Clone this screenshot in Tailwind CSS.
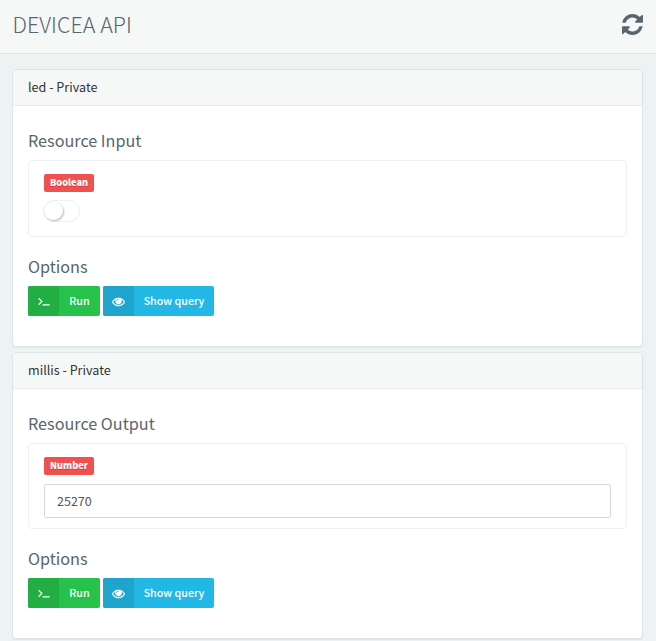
<!DOCTYPE html>
<html lang="en">
<head>
<meta charset="utf-8">
<title>DEVICEA API</title>
<script src="https://cdn.jsdelivr.net/npm/@tailwindcss/browser@4"></script>
</head>
<body class="h-[641px] overflow-hidden bg-[#edf2f3] font-['Noto_Sans_CJK_SC','Noto_Sans',sans-serif] text-[#58666e]">
<svg class="hidden">
  <symbol id="terminal" viewBox="0 0 1664 1792"><path fill="currentColor" stroke="currentColor" stroke-width="70" d="M585 983l-466 466q-10 10-23 10t-23-10l-50-50q-10-10-10-23t10-23l393-393-393-393q-10-10-10-23t10-23l50-50q10-10 23-10t23 10l466 466q10 10 10 23t-10 23zm1079 457v64q0 14-9 23t-23 9h-960q-14 0-23-9t-9-23v-64q0-14 9-23t23-9h960q14 0 23 9t9 23z"/></symbol>
  <symbol id="eye" viewBox="0 0 1792 1792"><path fill="currentColor" stroke="currentColor" stroke-width="30" d="M1664 960q-152-236-381-353 61 104 61 225 0 185-131.5 316.5t-316.5 131.5-316.5-131.5-131.5-316.5q0-121 61-225-229 117-381 353 133 205 333.5 326.5t434.5 121.5 434.5-121.5 333.5-326.5zm-720-384q0-20-14-34t-34-14q-125 0-214.5 89.5t-89.5 214.5q0 20 14 34t34 14 34-14 14-34q0-86 61-147t147-61q20 0 34-14t14-34zm848 384q0 34-20 69-140 230-376.5 368.5t-499.5 138.5-499.5-139-376.5-368q-20-35-20-69t20-69q140-229 376.5-368t499.5-139 499.5 139 376.5 368q20 35 20 69z"/></symbol>
</svg>
<header class="flex h-[54px] items-start justify-between border-b border-[#dee5e7] bg-[#f6f8f8] pr-[13px] pl-[12.5px]">
  <h1 class="pt-[8px] text-[21.5px] leading-[32px] font-light">DEVICEA API</h1>
  <svg class="mt-3 h-[25px] w-[21px]" viewBox="0 0 1536 1792"><path fill="#58666e" d="M1511 1056q0 5-1 7-64 268-268 434.500t-478 166.500q-146 0-282.500-55t-243.500-157l-129 129q-19 19-45 19t-45-19-19-45v-448q0-26 19-45t45-19h448q26 0 45 19t19 45-19 45l-137 137q71 66 161 102t187 36q134 0 250-65t186-179q11-17 53-117 8-23 30-23h192q13 0 22.500 9.500t9.500 22.500zm25-800v448q0 26-19 45t-45 19h-448q-26 0-45-19t-19-45 19-45l138-138q-148-137-349-137-134 0-250 65t-186 179q-11 17-53 117-8 23-30 23h-199q-13 0-22.500-9.500t-9.500-22.500v-7q65-268 270-434.500t480-166.500q146 0 284 55.500t245 156.500l130-129q19-19 45-19t45 19 19 45z"/></svg>
</header>
<main class="flex flex-col gap-[5px] pt-[15px] pr-[13px] pl-[12px]">
  <section class="h-[278px] rounded-[4px] border border-[#dee5e7] bg-white shadow-[0_1px_1px_rgba(0,0,0,0.05)]">
    <h2 class="h-[36px] rounded-t-[3px] border-b border-[#e6ecee] bg-[#f6f8f8] pl-[15px] text-[12.6px] leading-[33px] text-[#333]">led - Private</h2>
    <div class="px-[15px] pt-[24px]">
      <h3 class="h-[30px] text-[16.2px] leading-5">Resource Input</h3>
      <div class="flex h-[77px] flex-col items-start rounded-[4px] border border-[#edf1f2] px-[15px] pt-[13px]">
        <span class="flex h-[18px] w-[50px] items-center justify-center rounded-[2px] bg-[#f05050] text-[9.2px] leading-none font-black text-white [text-shadow:0_1px_0_rgba(0,0,0,0.2)]">Boolean</span>
        <div class="mt-2 -ml-px h-[22px] w-[37px] rounded-full border border-[#eee] bg-white">
          <div class="mt-px h-[18px] w-[19px] rounded-full bg-white shadow-[1px_1px_2px_rgba(0,0,0,0.28)]"></div>
        </div>
      </div>
      <h3 class="mt-[19px] h-[30px] text-[16.2px] leading-5">Options</h3>
      <div class="flex gap-[3px] text-[10.7px] font-medium text-white">
        <button class="flex h-[30px] w-[72px] overflow-hidden rounded-[2px] bg-[#27c24c]"><span class="flex h-full w-[31px] items-center justify-center bg-[#23ae44]"><svg class="h-3 w-3"><use href="#terminal"/></svg></span><span class="flex-1 leading-[30px]">Run</span></button>
        <button class="flex h-[30px] w-[111px] overflow-hidden rounded-[2px] bg-[#23b7e5]"><span class="flex h-full w-[31px] items-center justify-center bg-[#1fa4ce]"><svg class="h-[13px] w-[13px]"><use href="#eye"/></svg></span><span class="flex-1 leading-[30px]">Show query</span></button>
      </div>
    </div>
  </section>
  <section class="h-[287px] rounded-[4px] border border-[#dee5e7] bg-white shadow-[0_1px_1px_rgba(0,0,0,0.05)]">
    <h2 class="h-[36px] rounded-t-[3px] border-b border-[#e6ecee] bg-[#f6f8f8] pl-[15px] text-[12.6px] leading-[33px] text-[#333]">millis - Private</h2>
    <div class="px-[15px] pt-[24px]">
      <h3 class="h-[30px] text-[16.2px] leading-5">Resource Output</h3>
      <div class="flex h-[86px] flex-col items-start rounded-[4px] border border-[#edf1f2] px-[15px] pt-[13px]">
        <span class="flex h-[18px] w-[50px] items-center justify-center rounded-[2px] bg-[#f05050] text-[9.2px] leading-none font-black text-white [text-shadow:0_1px_0_rgba(0,0,0,0.2)]">Number</span>
        <input class="mt-[9px] h-[34px] w-[567px] rounded-[2px] border border-[#cfdadd] bg-white px-3 pb-[2px] text-[12.5px] text-[#555]" value="25270">
      </div>
      <h3 class="mt-[19px] h-[30px] text-[16.2px] leading-5">Options</h3>
      <div class="flex gap-[3px] text-[10.7px] font-medium text-white">
        <button class="flex h-[30px] w-[72px] overflow-hidden rounded-[2px] bg-[#27c24c]"><span class="flex h-full w-[31px] items-center justify-center bg-[#23ae44]"><svg class="h-3 w-3"><use href="#terminal"/></svg></span><span class="flex-1 leading-[30px]">Run</span></button>
        <button class="flex h-[30px] w-[111px] overflow-hidden rounded-[2px] bg-[#23b7e5]"><span class="flex h-full w-[31px] items-center justify-center bg-[#1fa4ce]"><svg class="h-[13px] w-[13px]"><use href="#eye"/></svg></span><span class="flex-1 leading-[30px]">Show query</span></button>
      </div>
    </div>
  </section>
</main>
</body>
</html>
